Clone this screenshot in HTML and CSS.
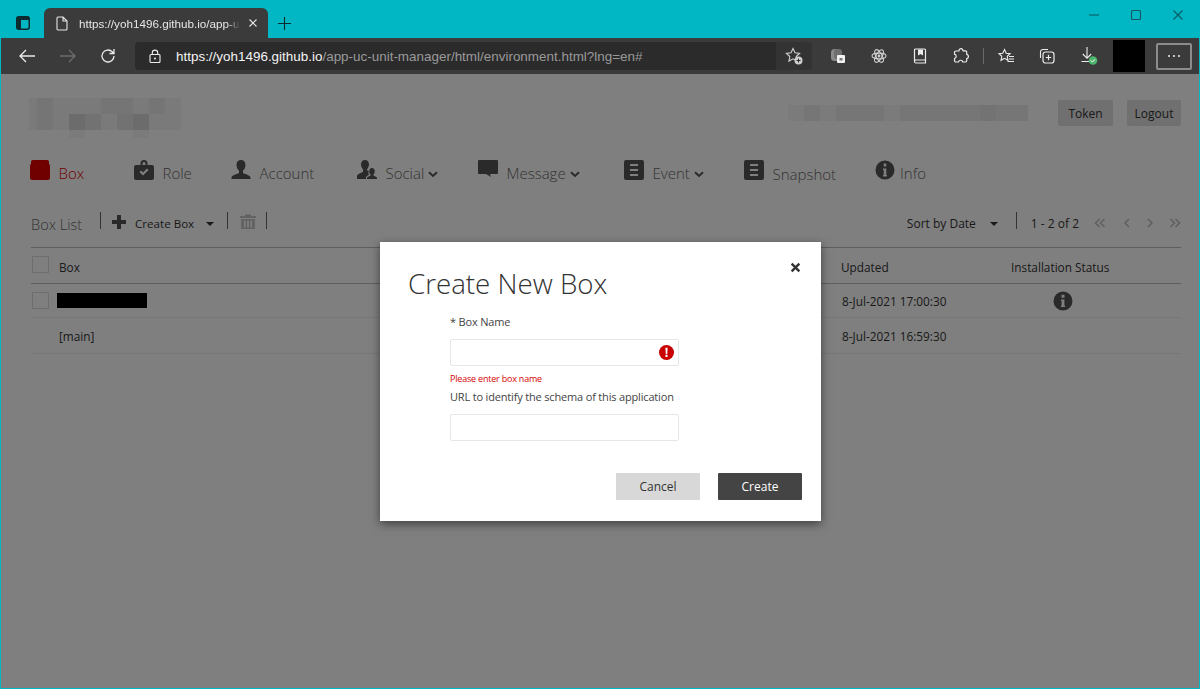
FILE: index.html
```html
<!DOCTYPE html>
<html lang="en">
<head>
<meta charset="utf-8">
<title>Create New Box</title>
<link rel="stylesheet" href="styles.css">
</head>
<body>
<div class="window">
  <header class="titlebar">
    <svg class="tb-side" viewBox="0 0 14 14"><rect x="0.75" y="0.75" width="12.5" height="12.5" rx="2" fill="none" stroke="#0b2b30" stroke-width="1.5"/><path d="M1 1h12v3H1zM1 4h4v9H1z" fill="#0b2b30"/></svg>
    <div class="tab">
      <svg class="tab-doc" viewBox="0 0 12 15"><path d="M1 2a1 1 0 0 1 1-1h5l4 4v8a1 1 0 0 1-1 1H2a1 1 0 0 1-1-1zM7 1v4h4" fill="none" stroke="#e6e6e6" stroke-width="1.1"/></svg>
      <span class="tab-title">https://yoh1496.github.io/app-u</span>
      <svg class="tab-x" viewBox="0 0 10 10"><path d="M1.5 1.5l7 7M8.500 1.500l-7 7" stroke="#e6e6e6" stroke-width="1.1"/></svg>
    </div>
    <svg class="tb-plus" viewBox="0 0 14 14"><path d="M7 0v14M0 7h14" stroke="#0b2b30" stroke-width="1.200"/></svg>
    <div class="win-controls">
      <svg viewBox="0 0 12 12"><path d="M1 6h10" stroke="#0d5a63" stroke-width="1.100"/></svg>
      <svg viewBox="0 0 12 12"><rect x="1.500" y="1.500" width="9" height="9" rx="1" fill="none" stroke="#0d5a63" stroke-width="1.100"/></svg>
      <svg viewBox="0 0 12 12"><path d="M1.500 1.500l9 9M10.500 1.500l-9 9" stroke="#0d5a63" stroke-width="1.100"/></svg>
    </div>
  </header>

  <div class="toolbar">
    <svg class="tool tool-back" viewBox="0 0 16 14"><path d="M1 7h15M7 1L1 7l6 6" fill="none" stroke="#ececec" stroke-width="1.300"/></svg>
    <svg class="tool tool-fwd" viewBox="0 0 16 14"><path d="M0 7h15M9 1l6 6-6 6" fill="none" stroke="#6d6d6d" stroke-width="1.300"/></svg>
    <svg class="tool tool-reload" viewBox="0 0 16 16"><path d="M14 8a6 6 0 1 1-1.800-4.300L14 5.500M14 1v4.500H9.500" fill="none" stroke="#ececec" stroke-width="1.300"/></svg>
    <div class="address">
      <svg class="lock" viewBox="0 0 12 14"><path d="M3.300 6V3.800a2.700 2.700 0 0 1 5.400 0V6" fill="none" stroke="#ececec" stroke-width="1.100"/><rect x="1" y="5.500" width="10" height="8" rx="1" fill="none" stroke="#ececec" stroke-width="1.100"/><circle cx="6" cy="9.500" r="1" fill="#ececec"/></svg>
      <span class="url"><span class="url-host">https://yoh1496.github.io</span>/app-uc-unit-manager/html/environment.html?lng=en#</span>
      <span class="fav-wrap">
        <svg class="fav" viewBox="0 0 18 18"><path d="M8 1.500l2 4.300 4.600.6-3.400 3.100.9 4.600L8 11.800l-4.100 2.300.9-4.600L1.400 6.400 6 5.800z" fill="none" stroke="#cfcfcf" stroke-width="1.100"/><circle cx="13.500" cy="13.500" r="4" fill="#cfcfcf"/><path d="M13.500 11.500v4M11.500 13.500h4" stroke="#2b2b2b" stroke-width="1"/></svg>
      </span>
    </div>
    <div class="ext-icons">
      <svg viewBox="0 0 16 16"><rect x="1" y="1" width="10" height="12" rx="3.500" fill="#8a8a8a"/><rect x="4" y="1" width="8" height="10" rx="3" fill="#6f6f6f"/><rect x="7" y="7" width="8" height="8" rx="1" fill="#f2f2f2"/><rect x="9.500" y="10" width="3" height="2.500" fill="#777"/></svg>
      <svg viewBox="0 0 16 16"><g fill="none" stroke="#d0d0d0" stroke-width="1.100"><ellipse cx="8" cy="8" rx="7" ry="2.900"/><ellipse cx="8" cy="8" rx="7" ry="2.900" transform="rotate(60 8 8)"/><ellipse cx="8" cy="8" rx="7" ry="2.900" transform="rotate(120 8 8)"/></g><circle cx="8" cy="8" r="1.400" fill="#d0d0d0"/></svg>
      <svg viewBox="0 0 16 16"><path d="M2.500 13V2a1 1 0 0 1 1-1h9a1 1 0 0 1 1 1v13H4a1.500 1.500 0 0 1-1.500-1.500V13A1.500 1.500 0 0 1 4 12h9.500" fill="none" stroke="#ececec" stroke-width="1.200"/><path d="M6 1.500h5v6L8.500 6 6 7.500z" fill="#ececec"/></svg>
      <svg viewBox="0 0 16 16"><path d="M6 2.500a2 2 0 0 1 3.500-1.200c.4.500.5 1 .4 1.500h2.600a1.200 1.200 0 0 1 1.200 1.200v2.300a2.200 2.200 0 0 1 0 4.300v2.200a1.200 1.200 0 0 1-1.200 1.200H9.800a2.200 2.200 0 0 0-4.300 0H3a1.500 1.500 0 0 1-1.500-1.500v-2a2.200 2.200 0 0 0 0-4.300V4.300C1.500 3.500 2 3 3 3h3z" fill="none" stroke="#ececec" stroke-width="1.200" stroke-linejoin="round"/></svg>
      <i class="ext-sep"></i>
      <svg viewBox="0 0 16 16"><path d="M6.500 1.500l1.700 3.700 3.900.4-2.900 2.700.8 4-3.500-2-3.500 2 .8-4L.9 5.600l3.900-.4z" fill="none" stroke="#ececec" stroke-width="1.100"/><path d="M11 8.500h5M11 11h5M9.500 13.500h6.500" stroke="#ececec" stroke-width="1.100"/></svg>
      <svg viewBox="0 0 16 16"><path d="M1.500 10V4a2.500 2.500 0 0 1 2.500-2.500h5" fill="none" stroke="#ececec" stroke-width="1.100"/><rect x="4" y="4" width="11" height="11" rx="2.500" fill="none" stroke="#ececec" stroke-width="1.200"/><path d="M9.500 6.800v5.400M6.800 9.500h5.400" stroke="#ececec" stroke-width="1.200"/></svg>
      <svg class="ext-dl" viewBox="0 0 18 18"><path d="M7 0v11M2.800 7L7 11.200 11.200 7M1.500 14.500H9" fill="none" stroke="#ececec" stroke-width="1.100"/><circle cx="13" cy="13.500" r="4.300" fill="#4fb56e"/><path d="M10.900 13.500l1.500 1.500 2.600-2.700" fill="none" stroke="#fff" stroke-width="1"/></svg>
    </div>
    <div class="profile"></div>
    <div class="menu-btn"><svg class="dots" viewBox="0 0 12 2"><circle cx="1" cy="1" r="1" fill="#eee"/><circle cx="6" cy="1" r="1" fill="#eee"/><circle cx="11" cy="1" r="1" fill="#eee"/></svg></div>
  </div>

  <main class="page">
    <div class="top-row">
      <svg class="mosaic-logo" viewBox="0 0 152 40"><rect width="152" height="32" fill="#f4f4f4"/><path d="M8 0h16v32H8zM72 0h32v16H72zM120 0h16v16h-16z" fill="#ebebeb"/><path d="M40 16h32v16H40zM88 16h32v16H88z" fill="#e4e4e4"/><path d="M40 16h16v16H40zM104 16h16v16h-16z" fill="#d8d8d8"/><path d="M40 32h16v8H40zM104 32h16v8h-16z" fill="#f6f6f6"/></svg>
      <div class="top-right">
        <svg class="mosaic-user" viewBox="0 0 240 16"><rect width="240" height="16" fill="#f6f6f6"/><path d="M16 0h16v16H16zM48 0h48v16H48zM112 0h128v16H112z" fill="#ececec"/><path d="M192 0h16v16h-16z" fill="#e6e6e6"/></svg>
        <button class="btn-top">Token</button>
        <button class="btn-top">Logout</button>
      </div>
    </div>

    <nav class="nav">
      <a class="nav-item nav-active"><svg class="nav-ic" viewBox="0 0 20 20"><path d="M3 0h14a2 2 0 0 1 2 2v3H1V2a2 2 0 0 1 2-2z" fill="#e00000"/><rect y="3.500" width="20" height="16.500" rx="2.500" fill="#e00000"/></svg><span>Box</span></a>
      <a class="nav-item"><svg class="nav-ic" viewBox="0 0 20 20"><path fill-rule="evenodd" d="M6.500 5V3.500A3.500 3.500 0 0 1 10 0a3.500 3.500 0 0 1 3.500 3.500V5H18a2 2 0 0 1 2 2v11a2 2 0 0 1-2 2H2a2 2 0 0 1-2-2V7a2 2 0 0 1 2-2zM8.500 5h3V3.500a1.500 1.500 0 0 0-3 0zM5.500 12l1.500-1.500 2 2 4-4 1.500 1.500-5.500 5.500z" fill="#555"/></svg><span>Role</span></a>
      <a class="nav-item"><svg class="nav-ic" viewBox="0 0 20 20"><path d="M10 0c3 0 4.500 2.300 4.500 5 0 2.500-1.300 4.700-2.500 5.600V13c1 .8 7 2 7.500 4.500V19H.5v-1.500C1 15 7 13.800 8 13v-2.400C6.800 9.700 5.500 7.500 5.500 5c0-2.700 1.500-5 4.500-5z" fill="#555"/></svg><span>Account</span></a>
      <a class="nav-item"><svg class="nav-ic" viewBox="0 0 20 20"><path d="M8 0c2.500 0 4 2 4 4.500 0 1.800-.8 3.600-2 4.700V10c.4.500 1.200.9 2 1.300-1 1-.8 2.500.2 3.500-1.500.7-3.200 1.600-3.200 2.700V19H0v-3c.3-2 5-3.200 6-4.200V9.200C4.800 8.100 4 6.300 4 4.500 4 2 5.500 0 8 0z" fill="#555"/><path d="M15 8c1.700 0 2.800 1.300 2.800 3.200 0 1.200-.5 2.300-1.300 3v1.200c.8.600 3 1 3.500 2.400V19H10v-1.200c.5-1.400 2.700-1.800 3.500-2.400v-1.200c-.8-.7-1.300-1.800-1.300-3C12.200 9.300 13.300 8 15 8z" fill="#555"/></svg><span>Social</span><svg class="chev" viewBox="0 0 10 7"><path d="M1 1.300l4 3.700 4-3.700" fill="none" stroke="#555" stroke-width="2"/></svg></a>
      <a class="nav-item"><svg class="nav-ic" viewBox="0 0 20 20"><path d="M1 0h18a1 1 0 0 1 1 1v12a1 1 0 0 1-1 1h-7l1 3-5-3H1a1 1 0 0 1-1-1V1a1 1 0 0 1 1-1z" fill="#555"/></svg><span>Message</span><svg class="chev" viewBox="0 0 10 7"><path d="M1 1.300l4 3.700 4-3.700" fill="none" stroke="#555" stroke-width="2"/></svg></a>
      <a class="nav-item"><svg class="nav-ic" viewBox="0 0 20 20"><path fill-rule="evenodd" d="M2 0h16a2 2 0 0 1 2 2v16a2 2 0 0 1-2 2H2a2 2 0 0 1-2-2V2a2 2 0 0 1 2-2zM6 4v2h8V4zM6 9v2h8V9zM6 14v2h8v-2z" fill="#555"/></svg><span>Event</span><svg class="chev" viewBox="0 0 10 7"><path d="M1 1.300l4 3.700 4-3.700" fill="none" stroke="#555" stroke-width="2"/></svg></a>
      <a class="nav-item nav-low"><svg class="nav-ic" viewBox="0 0 20 20"><path fill-rule="evenodd" d="M2 0h16a2 2 0 0 1 2 2v16a2 2 0 0 1-2 2H2a2 2 0 0 1-2-2V2a2 2 0 0 1 2-2zM6 4v2h8V4zM6 9v2h8V9zM6 14v2h8v-2z" fill="#555"/></svg><span>Snapshot</span></a>
      <a class="nav-item nav-info"><svg class="nav-ic" viewBox="0 0 20 20"><path fill-rule="evenodd" d="M10 .5a9.500 9.500 0 1 1 0 19 9.500 9.500 0 0 1 0-19zM8.700 3.500v3h2.600v-3zM8 8.500V10h.7v5H8v1.500h4V15h-.7V8.500z" fill="#555"/></svg><span>Info</span></a>
    </nav>

    <div class="list-bar">
      <h2 class="list-title">Box List</h2>
      <i class="vsep vsep-a"></i>
      <svg class="plus-ic" viewBox="0 0 14 14"><path d="M5 0h4v5h5v4H9v5H5V9H0V5h5z" fill="#555"/></svg>
      <span class="create-box">Create Box</span>
      <i class="caret"></i>
      <i class="vsep vsep-b"></i>
      <svg class="trash-ic" viewBox="0 0 16 15"><path d="M5 2V.5h6V2h5v2H0V2zM1 5h14v10H1zM4 6.500v7h1.500v-7zM7.200 6.500v7h1.600v-7zM10.500 6.500v7H12v-7z" fill="#c4c4c4" fill-rule="evenodd"/></svg>
      <i class="vsep vsep-c"></i>
      <span class="sort">Sort by Date</span>
      <i class="caret caret-sort"></i>
      <i class="vsep vsep-d"></i>
      <span class="range">1 - 2 of 2</span>
      <div class="pager">
        <svg viewBox="0 0 12 10"><path d="M5.500 1L1.500 5l4 4M10.500 1l-4 4 4 4" fill="none" stroke="#bdbdbd" stroke-width="1.500"/></svg>
        <svg viewBox="0 0 12 10"><path d="M10 1L6 5l4 4" fill="none" stroke="#bdbdbd" stroke-width="1.500"/></svg>
        <svg viewBox="0 0 12 10"><path d="M4 1l4 4-4 4" fill="none" stroke="#bdbdbd" stroke-width="1.500"/></svg>
        <svg viewBox="0 0 12 10"><path d="M1.500 1l4 4-4 4M6.500 1l4 4-4 4" fill="none" stroke="#bdbdbd" stroke-width="1.500"/></svg>
      </div>
    </div>

    <div class="table">
      <div class="row row-head">
        <i class="check"></i><span>Box</span><span>Updated</span><span>Installation Status</span>
      </div>
      <div class="row">
        <i class="check"></i><span class="redacted"></span><span class="date">8-Jul-2021 17:00:30</span>
        <span class="status"><svg class="status-ic" viewBox="0 0 20 20"><path fill-rule="evenodd" d="M10 .5a9.500 9.500 0 1 1 0 19 9.500 9.500 0 0 1 0-19zM8.500 3.800v3h3v-3zM8 8.500V10h.6v4.500H8V16h4v-1.500h-.6v-6z" fill="#555"/></svg></span>
      </div>
      <div class="row row-last">
        <i class="check check-none"></i><span>[main]</span><span class="date">8-Jul-2021 16:59:30</span><span></span>
      </div>
    </div>

    <div class="overlay"></div>
    <section class="modal">
      <svg class="modal-x" viewBox="0 0 10 10"><path d="M1.500 1.500l7 7M8.500 1.500l-7 7" stroke="#333" stroke-width="2.200"/></svg>
      <h1 class="modal-title">Create New Box</h1>
      <div class="form">
        <label class="field-label">* Box Name</label>
        <div class="input input-err">
          <svg class="err-ic" viewBox="0 0 16 16"><circle cx="8" cy="8" r="8" fill="#c80000"/><path d="M6.800 3h2.400l-.4 6.500H7.200zM6.900 10.500h2.200v2.300H6.900z" fill="#fff"/></svg>
        </div>
        <p class="err-text">Please enter box name</p>
        <label class="field-label">URL to identify the schema of this application</label>
        <div class="input"></div>
      </div>
      <div class="modal-actions">
        <button class="btn btn-cancel">Cancel</button>
        <button class="btn btn-create">Create</button>
      </div>
    </section>
  </main>
</div>
</body>
</html>
```

FILE: styles.css
```css
* { box-sizing: border-box; }
html, body { margin: 0; padding: 0; }
body { font-family: "Open Sans", "Noto Sans", "Liberation Sans", sans-serif; color: #333; overflow: hidden; }
h1, h2, p { margin: 0; font-weight: normal; }
svg { display: block; flex: none; }

.window { width: 1200px; height: 689px; display: flex; flex-direction: column; background: #00b7c3; }

/* title bar */
.titlebar { height: 38px; display: flex; align-items: flex-end; position: relative; flex: none; padding-left: 16px; }
.tb-side { width: 14px; height: 14px; margin-bottom: 8px; }
.tab { width: 224px; height: 30px; margin-left: 14px; background: #3b3b3b; border-radius: 6px 6px 0 0; display: flex; align-items: center; padding-left: 12px; }
.tab-doc { width: 12px; height: 15px; }
.tab-title { width: 161px; margin-left: 11px; font: 11.700px "Liberation Sans", sans-serif; color: #e6e6e6; white-space: nowrap; -webkit-mask-image: linear-gradient(to right, #000 92%, transparent); mask-image: linear-gradient(to right, #000 92%, transparent); }
.tab-x { width: 10px; height: 10px; margin-left: 8px; }
.tb-plus { width: 13px; height: 13px; margin: 0 0 8px 10px; }
.win-controls { margin-left: auto; display: flex; gap: 30px; align-self: flex-start; padding: 9px 16px 0 0; }
.win-controls svg { width: 12px; height: 12px; }

/* browser toolbar */
.toolbar { height: 36px; flex: none; background: #3b3b3b; display: flex; align-items: center; padding-left: 18px; margin: 0 1px; }
.tool { width: 16px; height: 16px; }
.tool-fwd { margin-left: 25px; }
.tool-reload { margin-left: 24px; }
.address { width: 677px; height: 28px; margin-left: 19px; background: #2b2b2b; border-radius: 4px; display: flex; align-items: center; padding-left: 14px; }
.lock { width: 12px; height: 14px; }
.url { margin-left: 15px; font: 13.440px "Liberation Sans", sans-serif; color: #9a9a9a; white-space: nowrap; }
.url-host { color: #f4f4f4; }
.fav-wrap { margin-left: auto; width: 36px; height: 28px; display: flex; align-items: center; justify-content: center; background: #333; border-radius: 0 4px 4px 0; }
.fav { width: 18px; height: 18px; }
.ext-icons { display: flex; align-items: center; margin-left: 18px; gap: 25px; }
.ext-icons svg { width: 16px; height: 16px; }
.ext-icons .ext-dl { width: 18px; height: 18px; }
.ext-sep { width: 1px; height: 16px; background: #6a6a6a; margin: 0 -11px; }
.profile { width: 32px; height: 32px; margin-left: 15px; background: #000; }
.menu-btn { width: 36px; height: 27px; margin-left: 11px; border: 2px solid #8c8c8c; border-radius: 2px; display: flex; align-items: center; justify-content: center; }
.dots { width: 12px; height: 2px; }

/* page */
.page { position: relative; flex: 1; min-height: 0; margin: 0 1px 1px; background: #fff; padding: 24px 18px 0 28px; }
.top-row { display: flex; justify-content: space-between; align-items: flex-start; height: 32px; }
.mosaic-logo { width: 152px; height: 40px; }
.top-right { display: flex; align-items: center; padding-top: 2px; }
.mosaic-user { width: 240px; height: 16px; margin-right: 30px; }
.btn-top { width: 55px; height: 26px; padding: 0; margin-left: 14px; border: 0; border-radius: 2px; background: #e0e0e0; color: #333; font: 12px "Open Sans", sans-serif; }
.btn-top:last-child { width: 54px; }
.btn-top:first-of-type { margin-left: 0; }

.nav { display: grid; grid-template-columns: 104px 97px 126px 121px 146px 120px 131px auto; margin: 30px 0 0 1px; height: 26px; }
.nav-item { display: flex; align-items: flex-start; color: #666; font-size: 15px; font-weight: 300; line-height: 20px; }
.nav-item span { margin: 3px 0 0 8.500px; }
.nav-low span { margin-top: 4px; }
.nav-info span { margin-left: 5px; }
.nav-ic { width: 20px; height: 20px; }
.nav-active { color: #e00000; }
.chev { width: 10px; height: 7px; margin: 11px 0 0 4px; }

.list-bar { display: flex; align-items: center; height: 30px; margin: 22px 0 0 2px; position: relative; font-size: 12px; }
.list-title { font-size: 14.600px; font-weight: 300; color: #666; width: 69px; padding-top: 2px; }
.vsep { width: 1px; height: 17px; background: #666; margin-top: -5px; }
.plus-ic { width: 14px; height: 14px; margin: -3px 0 0 11px; }
.create-box { margin: 0 0 0 9px; width: 62px; white-space: nowrap; font-size: 11.600px; }
.caret { width: 0; height: 0; border: 4px solid transparent; border-top-color: #333; border-bottom: 0; margin: 1px 0 0 9px; }
.vsep-b { margin-left: 13px; }
.trash-ic { width: 16px; height: 15px; margin: -4px 0 0 12px; }
.vsep-c { margin-left: 10px; }
.sort { margin-left: auto; white-space: nowrap; }
.caret-sort { margin-left: 14px; }
.vsep-d { margin-left: 18px; }
.range { margin-left: 14px; white-space: nowrap; }
.pager { display: flex; gap: 13px; margin: 0 0 0 15px; }
.pager svg { width: 12px; height: 10px; }

.table { margin-top: 9px; margin-left: 2px; border-top: 1px solid #bdbdbd; font-size: 11.800px; }
.row { display: grid; grid-template-columns: 28px 782px 170px 170px; align-items: center; height: 34px; border-bottom: 1px solid #eee; }
.row-head { height: 36px; border-bottom: 1px solid #bdbdbd; }
.row-head span { padding-top: 3px; }
.row-head .check { margin-bottom: 3px; }
.row-last { height: 36px; }
.check { width: 17px; height: 17px; margin-left: 1px; border: 1px solid #ddd; background: #fff; }
.check-none { visibility: hidden; }
.redacted { display: block; width: 90px; height: 15px; background: #000; margin-left: -2px; }
.date { margin-left: 1px; }
.status-ic { width: 20px; height: 20px; margin-left: 42px; }

/* modal */
.overlay { position: absolute; inset: 0; background: rgba(0, 0, 0, 0.5); }
.modal { position: absolute; left: 379px; top: 168px; width: 441px; height: 279px; background: #fff; box-shadow: 0 3px 9px rgba(0, 0, 0, 0.5); padding: 23px 19px 21px 28px; display: flex; flex-direction: column; }
.modal-x { position: absolute; right: 20px; top: 20px; width: 11px; height: 11px; }
.modal-title { font-size: 27.700px; font-weight: 300; line-height: 36px; color: #333; }
.form { margin: 13px 0 0 42px; width: 229px; }
.field-label { display: block; font-size: 11px; letter-spacing: -0.170px; line-height: 16px; color: #444; white-space: nowrap; }
.input { width: 229px; height: 27px; margin-top: 9px; border: 1px solid #e6e6e6; border-radius: 2px; background: #fff; display: flex; align-items: center; justify-content: flex-end; padding-right: 4px; }
.err-ic { width: 15px; height: 15px; }
.err-text { font-size: 9px; letter-spacing: -0.200px; line-height: 12px; color: #d40000; margin: 7px 0 4px; }
.modal-actions { margin-top: auto; display: flex; justify-content: flex-end; gap: 18px; }
.btn { width: 84px; height: 27px; padding: 0; border: 0; border-radius: 1px; font: 12px "Open Sans", sans-serif; }
.btn-cancel { background: #d8d8d8; color: #333; }
.btn-create { background: #444; color: #fff; }
```
